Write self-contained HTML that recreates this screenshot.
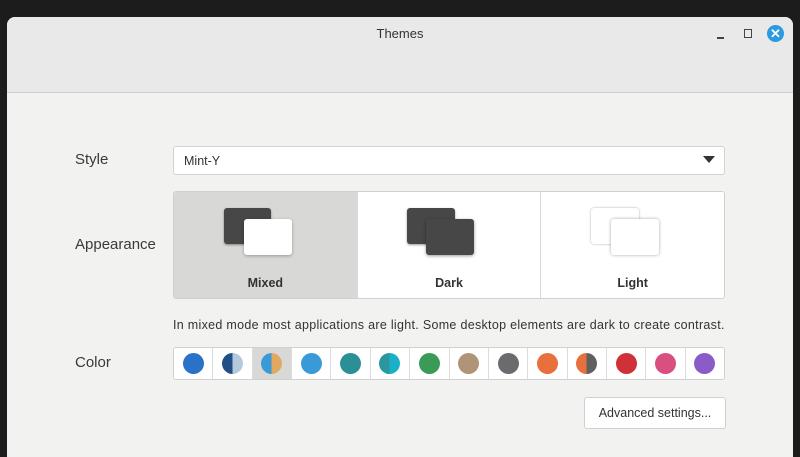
<!DOCTYPE html>
<html><head><style>
*{box-sizing:border-box;margin:0;padding:0}
body{width:800px;height:445px;background:#1c1c1c;font-family:"Liberation Sans",sans-serif;position:relative;overflow:hidden;color:#3c3c3c}
.win{position:absolute;left:7px;top:17px;width:786px;height:440px;background:#f2f2f1;border-radius:8px 8px 0 0;overflow:hidden}
.hdr{height:76px;background:#e9e9e9;border-bottom:1px solid #cfcfcf;position:relative}
.title{position:absolute;top:9px;width:100%;text-align:center;font-size:13px;color:#333}
.abs{position:absolute}
.lbl{position:absolute;font-size:15px;color:#3a3a3a}
.dd{position:absolute;left:173px;top:146px;width:552px;height:29px;background:#fff;border:1px solid #d2d2d2;border-radius:3px;font-size:12.5px;padding:7px 10px;color:#333}
.app{position:absolute;left:173px;top:191px;width:552px;height:108px;background:#fff;border:1px solid #d0d0d0;border-radius:3px;display:flex;overflow:hidden}
.app>div{flex:1;position:relative;border-right:1px solid #d8d8d8}
.app>div:last-child{border-right:none}
.app .sel{background:#d8d8d7}
.app b{position:absolute;bottom:8px;width:100%;text-align:center;font-size:12.5px;color:#333}
.r{position:absolute;border-radius:3px}
.colors{position:absolute;left:173px;top:347px;width:552px;height:33px;background:#fff;border:1px solid #d0d0d0;border-radius:3px;display:flex;overflow:hidden}
.colors>div{flex:1;border-right:1px solid #dcdcdc;display:flex;align-items:center;justify-content:center}
.colors>div:last-child{border-right:none}
.c{width:21px;height:21px;border-radius:50%}
.btn{position:absolute;left:584px;top:397px;width:142px;height:32px;background:#fff;border:1px solid #d0d0d0;border-radius:3px;font-size:12.5px;text-align:center;line-height:30px;color:#333}
</style></head><body>
<div class="win">
<div class="hdr"><div class="title">Themes</div>
<div class="abs" style="left:710px;top:20px;width:7px;height:1.5px;background:#444"></div>
<div class="abs" style="left:737px;top:12px;width:8px;height:9px;border:1.3px solid #444"></div>
<div class="abs" style="left:760px;top:8px;width:17px;height:17px;border-radius:50%;background:#2a9be0;color:#fff;font-size:13px;font-weight:bold;text-align:center;line-height:17px">✕</div>
</div>
</div>
<div class="lbl" style="left:75px;top:151px">Style</div>
<div class="dd">Mint-Y</div>
<div class="abs" style="left:703px;top:156px;width:0;height:0;border-left:6px solid transparent;border-right:6px solid transparent;border-top:7px solid #333"></div>
<div class="lbl" style="left:75px;top:236px">Appearance</div>
<div class="app">
<div class="sel">
<div class="r" style="left:50px;top:16px;width:47px;height:36px;background:#474747;box-shadow:0 1px 2px rgba(0,0,0,.4)"></div>
<div class="r" style="left:70px;top:27px;width:48px;height:36px;background:#fff;box-shadow:0 1px 3px rgba(0,0,0,.3)"></div>
<b>Mixed</b></div>
<div>
<div class="r" style="left:49px;top:16px;width:48px;height:36px;background:#474747;box-shadow:0 1px 2px rgba(0,0,0,.4)"></div>
<div class="r" style="left:68px;top:27px;width:48px;height:36px;background:#474747;box-shadow:0 1px 3px rgba(0,0,0,.4)"></div>
<b>Dark</b></div>
<div>
<div class="r" style="left:50px;top:16px;width:48px;height:36px;background:#fff;box-shadow:0 0 2px rgba(0,0,0,.35)"></div>
<div class="r" style="left:70px;top:27px;width:48px;height:36px;background:#fff;box-shadow:0 0 3px rgba(0,0,0,.35)"></div>
<b>Light</b></div>
</div>
<div class="abs" style="left:173px;top:318px;font-size:12.5px;color:#333;letter-spacing:0.3px;white-space:nowrap">In mixed mode most applications are light. Some desktop elements are dark to create contrast.</div>
<div class="lbl" style="left:75px;top:354px">Color</div>
<div class="colors">
<div><div class="c" style="background:#2a72c8"></div></div>
<div><div class="c" style="background:linear-gradient(90deg,#1f4f86 50%,#b4cadc 50%)"></div></div>
<div style="background:#d8d8d7"><div class="c" style="background:linear-gradient(90deg,#3a9ad8 50%,#e0a860 50%)"></div></div>
<div><div class="c" style="background:#3a9ad8"></div></div>
<div><div class="c" style="background:#2b8f96"></div></div>
<div><div class="c" style="background:linear-gradient(90deg,#2a96a0 50%,#1ab0c8 50%)"></div></div>
<div><div class="c" style="background:#3a9a58"></div></div>
<div><div class="c" style="background:#b09478"></div></div>
<div><div class="c" style="background:#6b6b6e"></div></div>
<div><div class="c" style="background:#e8703e"></div></div>
<div><div class="c" style="background:linear-gradient(90deg,#e8703e 50%,#606060 50%)"></div></div>
<div><div class="c" style="background:#d03038"></div></div>
<div><div class="c" style="background:#d85080"></div></div>
<div><div class="c" style="background:#8a5cc8"></div></div>
</div>
<div class="btn">Advanced settings...</div>
</body></html>
